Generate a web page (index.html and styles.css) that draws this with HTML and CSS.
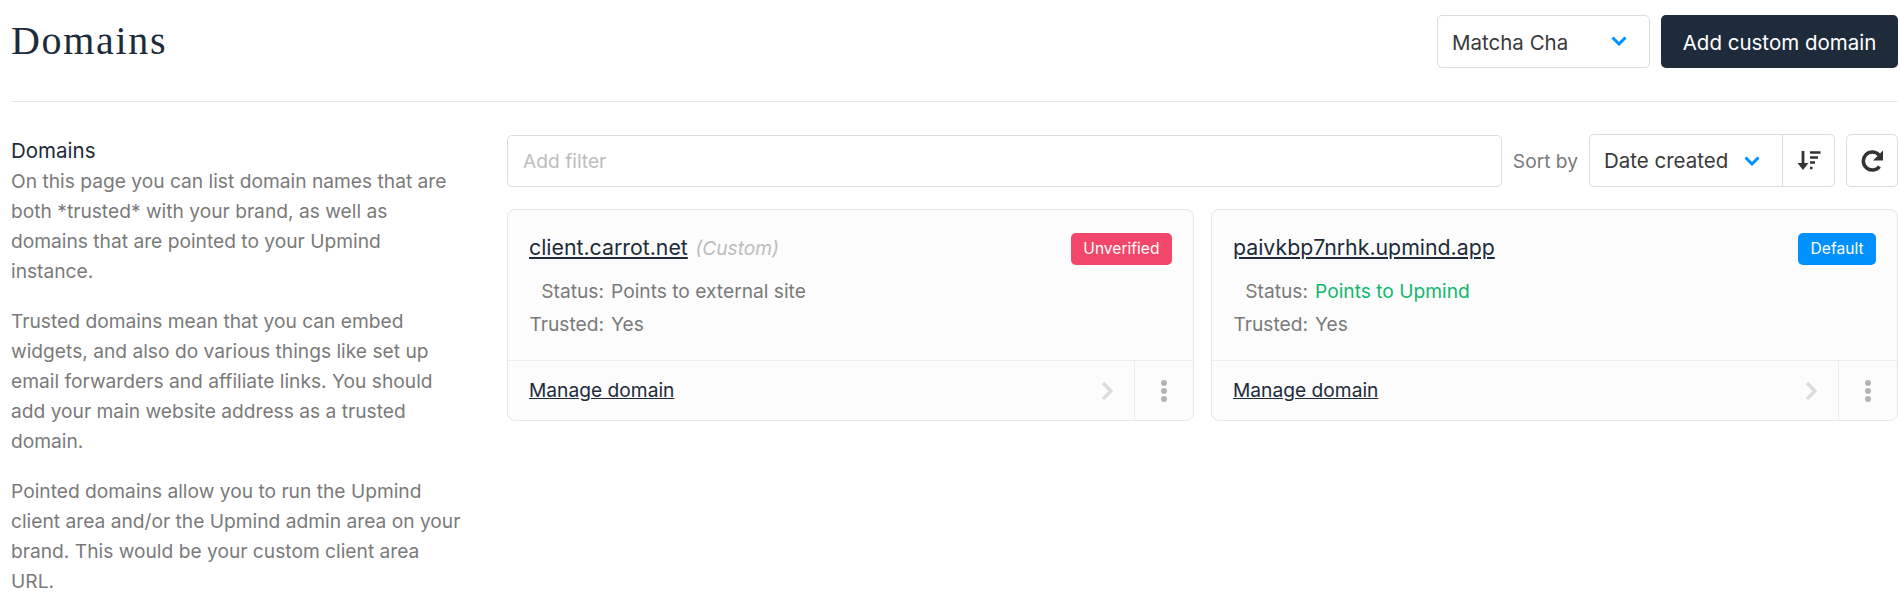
FILE: index.html
```html
<!DOCTYPE html>
<html lang="en">
<head>
  <meta charset="UTF-8" />
  <title>Domains</title>
  <link rel="stylesheet" href="styles.css">
</head>
<body>

  <!-- top bar -->
  <header class="top-bar">
    <h1 class="page-title">Domains</h1>
    <div class="top-actions">
      <div class="select brand-select">
        <span>Matcha Cha</span>
        <svg class="chevron" viewBox="0 0 16 10"><path d="M1.500 1.500L8 8l6.500-6.500" /></svg>
      </div>
      <button class="add-button">Add custom domain</button>
    </div>
  </header>

  <div class="layout">
    <!-- left column -->
    <aside class="intro">
      <h2>Domains</h2>
      <p>On this page you can list domain names that are both *trusted* with your brand, as well as domains that are pointed to your Upmind instance.</p>
      <p>Trusted domains mean that you can embed widgets, and also do various things like set up email forwarders and affiliate links. You should add your main website address as a trusted domain.</p>
      <p>Pointed domains allow you to run the Upmind client area and/or the Upmind admin area on your brand. This would be your custom client area URL.</p>
    </aside>

    <main class="content">
      <div class="toolbar">
        <div class="filter">Add filter</div>
        <span class="sort-label">Sort by</span>
        <div class="sort-group">
          <div class="sort-select">
            <span>Date created</span>
            <svg class="chevron" viewBox="0 0 16 10"><path d="M1.500 1.500L8 8l6.500-6.500" /></svg>
          </div>
          <div class="sort-dir">
            <svg class="sort-icon" viewBox="0 0 24 20">
              <path class="sort-arrow" d="M6 0v16" />
              <path class="sort-head" d="M0.500 12h11L6 19z" />
              <path class="sort-bars" d="M13 1.500h10.500M13 6.500h8M13 11.500h5M13 17h2.500" />
            </svg>
          </div>
        </div>
        <div class="refresh">
          <svg class="refresh-icon" viewBox="0 0 22 22">
            <path d="M18.500 16.500A9 9 0 1 1 18 5" />
            <path class="refresh-head" d="M22 0.500v10h-10z" />
          </svg>
        </div>
      </div>

      <div class="cards">
        <div class="card">
          <div class="card-body">
            <div class="card-head">
              <div><a class="domain-name">client.carrot.net</a> <em class="domain-type">(Custom)</em></div>
              <span class="badge badge-red">Unverified</span>
            </div>
            <div class="info-row"><span class="info-label">Status:</span><span>Points to external site</span></div>
            <div class="info-row"><span class="info-label">Trusted:</span><span>Yes</span></div>
          </div>
          <div class="card-foot">
            <a class="manage-link">Manage domain</a>
            <svg class="arrow" viewBox="0 0 12 20"><path d="M2 2l8 8-8 8" /></svg>
            <div class="more"><i></i><i></i><i></i></div>
          </div>
        </div>

        <div class="card">
          <div class="card-body">
            <div class="card-head">
              <div><a class="domain-name">paivkbp7nrhk.upmind.app</a></div>
              <span class="badge badge-blue">Default</span>
            </div>
            <div class="info-row"><span class="info-label">Status:</span><span class="ok">Points to Upmind</span></div>
            <div class="info-row"><span class="info-label">Trusted:</span><span>Yes</span></div>
          </div>
          <div class="card-foot">
            <a class="manage-link">Manage domain</a>
            <svg class="arrow" viewBox="0 0 12 20"><path d="M2 2l8 8-8 8" /></svg>
            <div class="more"><i></i><i></i><i></i></div>
          </div>
        </div>
      </div>
    </main>
  </div>

</body>
</html>
```

FILE: styles.css
```css
html, body {
  height: 608px;
  overflow: hidden;
}

body {
  margin: 0;
  padding: 0 2px 0 11px;
  font-family: Inter, "Liberation Sans", sans-serif;
  font-size: 19.2px;
  line-height: 30px;
  color: #7a7a7a;
  background-color: #fff;
}

.top-bar {
  display: flex;
  justify-content: space-between;
  height: 86px;
  padding-top: 15px;
  border-bottom: 1px solid #e9e9e9;
}

.page-title {
  margin: 0;
  font-family: "Liberation Serif", serif;
  font-weight: 400;
  font-size: 40px;
  line-height: 52px;
  letter-spacing: 1.7px;
  color: #1d2b3a;
}

.top-actions {
  display: flex;
  gap: 11px;
  height: 53px;
}

.select {
  display: flex;
  align-items: center;
  justify-content: space-between;
  box-sizing: border-box;
  border: 1px solid #dcdcdc;
  border-radius: 5px;
  font-size: 20.5px;
  color: #3a3a3a;
}

.brand-select {
  width: 213px;
  padding: 0 22px 0 14px;
}

.brand-select span {
  padding-top: 2px;
}

.brand-select .chevron {
  margin-bottom: 2px;
}

.chevron {
  width: 16px;
  height: 10px;
  fill: none;
  stroke: #0090ff;
  stroke-width: 3;
}

.add-button {
  width: 237px;
  padding: 2px 0 0;
  border: none;
  border-radius: 5px;
  background-color: #1d2b3a;
  color: #fff;
  font-family: inherit;
  font-size: 20.5px;
}

.layout {
  display: flex;
  padding-top: 32px;
}

.intro {
  flex: 0 0 496px;
  box-sizing: border-box;
  padding: 2px 41px 0 0;
}

.intro h2 {
  margin: 0;
  font-size: 20.5px;
  font-weight: 400;
  color: #1d2b3a;
}

.intro p {
  margin: 0 0 20px;
}

.content {
  flex: 1;
  min-width: 0;
}

.toolbar {
  display: flex;
  align-items: center;
  height: 53px;
}

.filter {
  flex: 1;
  box-sizing: border-box;
  height: 52px;
  margin: 1px 11px 0 0;
  padding: 10px 15px;
  border: 1px solid #dcdcdc;
  border-radius: 5px;
  color: #bdbdbd;
}

.sort-label {
  margin-right: 11px;
}

.sort-group {
  display: flex;
  box-sizing: border-box;
  width: 246px;
  height: 53px;
  margin-right: 11px;
  border: 1px solid #dcdcdc;
  border-radius: 5px;
  font-size: 20.5px;
  color: #3a3a3a;
}

.sort-select {
  flex: 1;
  display: flex;
  align-items: center;
  justify-content: space-between;
  padding: 0 22px 0 14px;
}

.sort-dir {
  display: flex;
  align-items: center;
  justify-content: center;
  width: 51px;
  border-left: 1px solid #dcdcdc;
}

.sort-icon {
  width: 24px;
  height: 20px;
  fill: none;
  stroke: #333;
}

.sort-arrow {
  stroke-width: 2.800;
}

.sort-head {
  fill: #333;
  stroke: none;
}

.sort-bars {
  stroke-width: 2.600;
}

.refresh {
  display: flex;
  align-items: center;
  justify-content: center;
  box-sizing: border-box;
  width: 52px;
  height: 53px;
  border: 1px solid #dcdcdc;
  border-radius: 5px;
}

.refresh-icon {
  width: 22px;
  height: 22px;
  fill: none;
  stroke: #333;
  stroke-width: 3.500;
}

.refresh-head {
  fill: #333;
  stroke: none;
}

.cards {
  display: grid;
  grid-template-columns: 1fr 1fr;
  gap: 17px;
  margin-top: 22px;
}

.card {
  box-sizing: border-box;
  height: 212px;
  border: 1px solid #e6e6e6;
  border-radius: 8px;
  background-color: #fcfcfc;
}

.card-body {
  box-sizing: border-box;
  height: 150px;
  padding: 22px 21px 0;
}

.card-head {
  display: flex;
  justify-content: space-between;
  align-items: flex-start;
  height: 41px;
  margin-bottom: 3px;
}

.domain-name {
  font-size: 21.3px;
  line-height: 30px;
  color: #1d2b3a;
  text-decoration: underline;
}

.domain-type {
  margin-left: 2px;
  color: #bdbdbd;
}

.badge {
  height: 32px;
  margin-top: 1px;
  padding: 0 12.500px;
  border-radius: 5px;
  font-size: 15.600px;
  line-height: 32px;
  color: #fff;
}

.badge-red {
  background-color: #f2466b;
}

.badge-blue {
  background-color: #0090ff;
}

.info-row {
  display: flex;
  height: 33px;
}

.info-label {
  width: 75px;
  margin-right: 7px;
  text-align: right;
}

.ok {
  color: #12b76f;
}

.card-foot {
  display: flex;
  align-items: center;
  box-sizing: border-box;
  height: 60px;
  padding: 0 0 0 21px;
  border-top: 1px solid #ececec;
}

.manage-link {
  flex: 1;
  margin-top: -2px;
  color: #1d2b3a;
  text-decoration: underline;
}

.arrow {
  width: 12px;
  height: 20px;
  margin-right: 21px;
  fill: none;
  stroke: #dcdcdc;
  stroke-width: 3.500;
}

.more {
  display: flex;
  flex-direction: column;
  align-items: center;
  justify-content: center;
  gap: 2px;
  width: 58px;
  height: 100%;
  border-left: 1px solid #ececec;
}

.more i {
  width: 6px;
  height: 6px;
  border-radius: 50%;
  background-color: #b4b4b4;
}
```
